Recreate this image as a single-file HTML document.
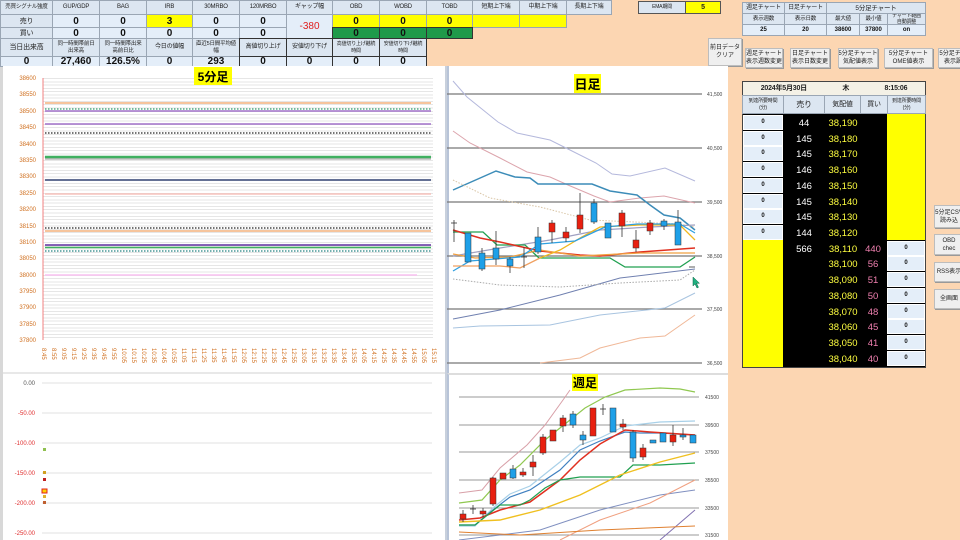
<!DOCTYPE html>
<html><head><meta charset="utf-8"><style>
*{margin:0;padding:0;box-sizing:border-box}
body{width:960px;height:540px;overflow:hidden;background:#fcd6b2;font-family:"Liberation Sans","Noto Sans CJK JP",sans-serif;position:relative}
.c{position:absolute;display:flex;align-items:center;justify-content:center;text-align:center;border:1px solid #9aa6b4;background:#dce6f1;font-size:6px;line-height:7px;color:#222;white-space:nowrap;overflow:hidden;letter-spacing:-0.2px}
.v{background:#e4eef9;font-size:10px;font-weight:bold;color:#111;letter-spacing:0}
.y{background:#ffff00}.g{background:#1f9a4a}
.k{border-color:#333}
.btn{position:absolute;background:#efefef;border:1px solid #bdbdbd;font-size:6px;line-height:8px;text-align:center;display:flex;align-items:center;justify-content:center;color:#222;box-shadow:1px 1px 0 #999;white-space:nowrap;overflow:hidden}
.panel{position:absolute;background:#fff}
</style></head><body>
<div style="position:absolute;left:0;top:0;width:3px;height:540px;background:#d8d8d8"></div>
<div class="c" style="left:0;top:0;width:53px;height:15px;font-size:5.5px">売買シグナル強度</div>
<div class="c" style="left:52px;top:0;width:48px;height:15px">GUP/GDP</div>
<div class="c" style="left:99px;top:0;width:48px;height:15px">BAG</div>
<div class="c" style="left:146px;top:0;width:47px;height:15px">IRB</div>
<div class="c" style="left:192px;top:0;width:48px;height:15px">30MRBO</div>
<div class="c" style="left:239px;top:0;width:48px;height:15px">120MRBO</div>
<div class="c" style="left:286px;top:0;width:47px;height:15px">ギャップ幅</div>
<div class="c" style="left:332px;top:0;width:48px;height:15px">OBD</div>
<div class="c" style="left:379px;top:0;width:48px;height:15px">WOBD</div>
<div class="c" style="left:426px;top:0;width:47px;height:15px">TOBD</div>
<div class="c" style="left:472px;top:0;width:48px;height:15px">短期上下端</div>
<div class="c" style="left:519px;top:0;width:48px;height:15px">中期上下端</div>
<div class="c" style="left:566px;top:0;width:46px;height:15px">長期上下端</div>
<div class="c" style="left:0;top:14px;width:53px;height:14px;font-size:7px">売り</div>
<div class="c v" style="left:52px;top:14px;width:48px;height:14px">0</div>
<div class="c v" style="left:99px;top:14px;width:48px;height:14px">0</div>
<div class="c v y" style="left:146px;top:14px;width:47px;height:14px">3</div>
<div class="c v" style="left:192px;top:14px;width:48px;height:14px">0</div>
<div class="c v" style="left:239px;top:14px;width:48px;height:14px">0</div>
<div class="c v" style="left:286px;top:14px;width:47px;height:25px;color:#e02020;font-weight:normal">-380</div>
<div class="c v y" style="left:332px;top:14px;width:48px;height:14px">0</div>
<div class="c v y" style="left:379px;top:14px;width:48px;height:14px">0</div>
<div class="c v y" style="left:426px;top:14px;width:47px;height:14px">0</div>
<div class="c y" style="left:472px;top:14px;width:48px;height:14px"></div>
<div class="c y" style="left:519px;top:14px;width:48px;height:14px"></div>
<div class="c" style="left:0;top:27px;width:53px;height:12px;font-size:7px">買い</div>
<div class="c v" style="left:52px;top:27px;width:48px;height:12px">0</div>
<div class="c v" style="left:99px;top:27px;width:48px;height:12px">0</div>
<div class="c v" style="left:146px;top:27px;width:47px;height:12px">0</div>
<div class="c v" style="left:192px;top:27px;width:48px;height:12px">0</div>
<div class="c v" style="left:239px;top:27px;width:48px;height:12px">0</div>
<div class="c v g k" style="left:332px;top:27px;width:48px;height:12px">0</div>
<div class="c v g k" style="left:379px;top:27px;width:48px;height:12px">0</div>
<div class="c v g k" style="left:426px;top:27px;width:47px;height:12px">0</div>
<div class="c" style="left:0;top:38px;width:53px;height:19px;font-size:7px">当日出来高</div>
<div class="c" style="left:52px;top:38px;width:48px;height:19px;font-size:5.5px">同一時間帯前日<br>出来高</div>
<div class="c" style="left:99px;top:38px;width:48px;height:19px;font-size:5.5px">同一時間帯出来<br>高前日比</div>
<div class="c" style="left:146px;top:38px;width:47px;height:19px">今日の値幅</div>
<div class="c" style="left:192px;top:38px;width:48px;height:19px;font-size:5.5px">直近5日間平均値<br>幅</div>
<div class="c k" style="left:239px;top:38px;width:48px;height:19px">高値切り上げ</div>
<div class="c k" style="left:286px;top:38px;width:47px;height:19px">安値切り下げ</div>
<div class="c k" style="left:332px;top:38px;width:48px;height:19px;font-size:5px">高値切り上げ継続<br>時間</div>
<div class="c k" style="left:379px;top:38px;width:48px;height:19px;font-size:5px">安値切り下げ継続<br>時間</div>
<div class="c v" style="left:0;top:56px;width:53px;height:11px">0</div>
<div class="c v" style="left:52px;top:56px;width:48px;height:11px">27,460</div>
<div class="c v" style="left:99px;top:56px;width:48px;height:11px">126.5%</div>
<div class="c v" style="left:146px;top:56px;width:47px;height:11px">0</div>
<div class="c v" style="left:192px;top:56px;width:48px;height:11px">293</div>
<div class="c v k" style="left:239px;top:56px;width:48px;height:11px">0</div>
<div class="c v k" style="left:286px;top:56px;width:47px;height:11px">0</div>
<div class="c v k" style="left:332px;top:56px;width:48px;height:11px">0</div>
<div class="c v k" style="left:379px;top:56px;width:48px;height:11px">0</div>

<div class="c" style="left:638px;top:1px;width:48px;height:13px;border-color:#555;font-size:5px">EMA期間</div>
<div class="c y" style="left:685px;top:1px;width:36px;height:13px;border-color:#555;font-size:7px;font-weight:bold">5</div>
<div class="c" style="left:742px;top:2px;width:43px;height:12px;font-size:6px">週足チャート</div>
<div class="c" style="left:784px;top:2px;width:43px;height:12px;font-size:6px">日足チャート</div>
<div class="c" style="left:826px;top:2px;width:100px;height:12px;font-size:6.5px">5分足チャート</div>
<div class="c" style="left:742px;top:13px;width:43px;height:12px;font-size:5.5px">表示週数</div>
<div class="c" style="left:784px;top:13px;width:43px;height:12px;font-size:5.5px">表示日数</div>
<div class="c" style="left:826px;top:13px;width:34px;height:12px;font-size:5.5px">最大値</div>
<div class="c" style="left:859px;top:13px;width:29px;height:12px;font-size:5.5px">最小値</div>
<div class="c" style="left:887px;top:13px;width:39px;height:12px;font-size:5px;line-height:6px">チャート範囲<br>自動調整</div>
<div class="c v" style="left:742px;top:24px;width:43px;height:12px;font-size:6px">25</div>
<div class="c v" style="left:784px;top:24px;width:43px;height:12px;font-size:6px">20</div>
<div class="c v" style="left:826px;top:24px;width:34px;height:12px;font-size:6px">38600</div>
<div class="c v" style="left:859px;top:24px;width:29px;height:12px;font-size:6px">37800</div>
<div class="c v" style="left:887px;top:24px;width:39px;height:12px;font-size:6px">on</div>
<div class="btn" style="left:708px;top:38px;width:34px;height:28px">前日データ<br>クリア</div>
<div class="btn" style="left:745px;top:48px;width:38px;height:20px">週足チャート<br>表示週数変更</div>
<div class="btn" style="left:790px;top:48px;width:40px;height:20px">日足チャート<br>表示日数変更</div>
<div class="btn" style="left:838px;top:48px;width:40px;height:20px">5分足チャート<br>気配値表示</div>
<div class="btn" style="left:884px;top:48px;width:49px;height:20px">5分足チャート<br>OME値表示</div>
<div class="btn" style="left:938px;top:48px;width:30px;height:20px">5分足チャ<br>表示調</div>
<div class="btn" style="left:934px;top:205px;width:30px;height:23px">5分足CSV<br>読み込</div>
<div class="btn" style="left:934px;top:234px;width:30px;height:21px">OBD<br>chec</div>
<div class="btn" style="left:934px;top:262px;width:30px;height:20px">RSS表示</div>
<div class="btn" style="left:934px;top:289px;width:30px;height:20px">全画面</div>

<div style="position:absolute;left:742px;top:81px;width:184px;height:287px;background:#000;border:1px solid #444"></div>
<div class="c" style="left:742px;top:81px;width:184px;height:15px;background:#f4f1e6;border-color:#444;font-size:7px;font-weight:bold;justify-content:space-around">
<span>2024年5月30日</span><span>木</span><span>8:15:06</span></div>
<div class="c" style="left:742px;top:95px;width:42px;height:19px;font-size:5px">到達所要時間<br>(分)</div>
<div class="c" style="left:783px;top:95px;width:42px;height:19px;font-size:8px">売り</div>
<div class="c" style="left:824px;top:95px;width:37px;height:19px;font-size:7px">気配値</div>
<div class="c" style="left:860px;top:95px;width:28px;height:19px;font-size:7px">買い</div>
<div class="c" style="left:887px;top:95px;width:39px;height:19px;font-size:5px">到達所要時間<br>(分)</div>
<div style="position:absolute;left:887px;top:114px;width:38px;height:126px;background:#ffff00"></div>
<div style="position:absolute;left:743px;top:240px;width:40px;height:127px;background:#ffff00"></div>
<div class="c v" style="left:743px;top:115px;width:40px;height:15px;font-size:6px;border-color:#fff">0</div>
<div class="c v" style="left:743px;top:131px;width:40px;height:15px;font-size:6px;border-color:#fff">0</div>
<div class="c v" style="left:743px;top:146px;width:40px;height:15px;font-size:6px;border-color:#fff">0</div>
<div class="c v" style="left:743px;top:162px;width:40px;height:15px;font-size:6px;border-color:#fff">0</div>
<div class="c v" style="left:743px;top:178px;width:40px;height:15px;font-size:6px;border-color:#fff">0</div>
<div class="c v" style="left:743px;top:194px;width:40px;height:15px;font-size:6px;border-color:#fff">0</div>
<div class="c v" style="left:743px;top:209px;width:40px;height:15px;font-size:6px;border-color:#fff">0</div>
<div class="c v" style="left:743px;top:225px;width:40px;height:15px;font-size:6px;border-color:#fff">0</div>
<div class="c v" style="left:887px;top:241px;width:38px;height:15px;font-size:6px;border-color:#fff">0</div>
<div class="c v" style="left:887px;top:256px;width:38px;height:15px;font-size:6px;border-color:#fff">0</div>
<div class="c v" style="left:887px;top:272px;width:38px;height:15px;font-size:6px;border-color:#fff">0</div>
<div class="c v" style="left:887px;top:288px;width:38px;height:15px;font-size:6px;border-color:#fff">0</div>
<div class="c v" style="left:887px;top:304px;width:38px;height:15px;font-size:6px;border-color:#fff">0</div>
<div class="c v" style="left:887px;top:319px;width:38px;height:15px;font-size:6px;border-color:#fff">0</div>
<div class="c v" style="left:887px;top:335px;width:38px;height:15px;font-size:6px;border-color:#fff">0</div>
<div class="c v" style="left:887px;top:351px;width:38px;height:15px;font-size:6px;border-color:#fff">0</div>

<svg style="position:absolute;left:0;top:0" width="960" height="540" font-family="Liberation Sans, Noto Sans CJK JP, sans-serif">
<g font-size="9.5" text-anchor="middle">
<g fill="#fff"><text x="804" y="126">44</text><text x="804" y="142">145</text><text x="804" y="157">145</text><text x="804" y="173">146</text><text x="804" y="189">146</text><text x="804" y="205">145</text><text x="804" y="220">145</text><text x="804" y="236">144</text><text x="804" y="252">566</text></g>
<g fill="#ffff40"><text x="843" y="126">38,190</text><text x="843" y="142">38,180</text><text x="843" y="157">38,170</text><text x="843" y="173">38,160</text><text x="843" y="189">38,150</text><text x="843" y="205">38,140</text><text x="843" y="220">38,130</text><text x="843" y="236">38,120</text><text x="843" y="252">38,110</text><text x="843" y="267">38,100</text><text x="843" y="283">38,090</text><text x="843" y="299">38,080</text><text x="843" y="315">38,070</text><text x="843" y="330">38,060</text><text x="843" y="346">38,050</text><text x="843" y="362">38,040</text></g>
<g fill="#f080b0"><text x="873" y="252">440</text><text x="873" y="267">56</text><text x="873" y="283">51</text><text x="873" y="299">50</text><text x="873" y="315">48</text><text x="873" y="330">45</text><text x="873" y="346">41</text><text x="873" y="362">40</text></g>
</g>
</svg>

<div class="panel" style="left:3px;top:66px;width:442px;height:306px"></div>
<div class="panel" style="left:3px;top:372px;width:442px;height:168px;border-top:2px solid #e8e8e8"></div>
<div class="panel" style="left:447px;top:66px;width:281px;height:308px;border-left:2px solid #b8c4d8"></div>
<div class="panel" style="left:447px;top:373px;width:281px;height:167px;border-left:2px solid #b8c4d8;border-top:2px solid #ddd"></div>
<div style="position:absolute;left:445px;top:66px;width:2px;height:474px;background:#c8d0dc"></div>
<div style="position:absolute;left:43px;top:78px;width:390px;height:262px;background:repeating-linear-gradient(to bottom,#e6e6e6 0,#e6e6e6 1px,transparent 1px,transparent 3.28px)"></div>

<svg style="position:absolute;left:0;top:0" width="960" height="540" font-family="Liberation Sans, Noto Sans CJK JP, sans-serif">
<rect x="194" y="67" width="38" height="18" fill="#ffff00"/>
<text x="213" y="81" font-size="12" font-weight="bold" text-anchor="middle">5分足</text>
<line x1="43" y1="78" x2="43" y2="340" stroke="#f08080" stroke-width="1"/>
<g font-size="6" fill="#d07020" text-anchor="end">
<text x="36" y="80">38600</text><text x="36" y="96">38550</text><text x="36" y="113">38500</text><text x="36" y="129">38450</text><text x="36" y="146">38400</text><text x="36" y="162">38350</text><text x="36" y="178">38300</text><text x="36" y="195">38250</text><text x="36" y="211">38200</text><text x="36" y="228">38150</text><text x="36" y="244">38100</text><text x="36" y="260">38050</text><text x="36" y="277">38000</text><text x="36" y="293">37950</text><text x="36" y="309">37900</text><text x="36" y="326">37850</text><text x="36" y="342">37800</text>
</g>
<g stroke-width="1.2" fill="none">
<line x1="45" y1="103" x2="431" y2="103" stroke="#f0a060"/>
<line x1="45" y1="109" x2="431" y2="109" stroke="#30a070" stroke-dasharray="1.5 1.5"/>
<line x1="45" y1="111" x2="431" y2="111" stroke="#a070c8" stroke-width="1.6"/>
<line x1="45" y1="124" x2="431" y2="124" stroke="#a070c8" stroke-width="1.6"/>
<line x1="45" y1="133" x2="431" y2="133" stroke="#222" stroke-dasharray="1.5 1.5"/>
<line x1="45" y1="157" x2="431" y2="157" stroke="#40b060" stroke-width="2.5"/>
<line x1="45" y1="159" x2="431" y2="159" stroke="#999" stroke-width="1"/>
<line x1="45" y1="180" x2="431" y2="180" stroke="#304070" stroke-width="1.6"/>
<line x1="45" y1="194" x2="431" y2="194" stroke="#f8b8b0"/>
<line x1="45" y1="228" x2="431" y2="228" stroke="#222" stroke-dasharray="1.5 1.5"/>
<line x1="45" y1="231" x2="431" y2="231" stroke="#f0a060"/>
<line x1="45" y1="245" x2="431" y2="245" stroke="#6030a0" stroke-width="1.6"/>
<line x1="45" y1="247.5" x2="431" y2="247.5" stroke="#40b060" stroke-width="1.6"/>
<line x1="45" y1="251" x2="431" y2="251" stroke="#208080" stroke-dasharray="1.5 1.5"/>
<line x1="45" y1="275" x2="417" y2="275" stroke="#f8c0f0" stroke-width="1.5"/>
</g>
<g font-size="6" fill="#d07020">
<text transform="translate(42,348) rotate(90)">8:45</text><text transform="translate(52,348) rotate(90)">8:55</text><text transform="translate(62,348) rotate(90)">9:05</text><text transform="translate(72,348) rotate(90)">9:15</text><text transform="translate(82,348) rotate(90)">9:25</text><text transform="translate(92,348) rotate(90)">9:35</text><text transform="translate(102,348) rotate(90)">9:45</text><text transform="translate(112,348) rotate(90)">9:55</text><text transform="translate(122,348) rotate(90)">10:05</text><text transform="translate(132,348) rotate(90)">10:15</text><text transform="translate(142,348) rotate(90)">10:25</text><text transform="translate(152,348) rotate(90)">10:35</text><text transform="translate(162,348) rotate(90)">10:45</text><text transform="translate(172,348) rotate(90)">10:55</text><text transform="translate(182,348) rotate(90)">11:05</text><text transform="translate(192,348) rotate(90)">11:15</text><text transform="translate(202,348) rotate(90)">11:25</text><text transform="translate(212,348) rotate(90)">11:35</text><text transform="translate(222,348) rotate(90)">11:45</text><text transform="translate(232,348) rotate(90)">11:55</text><text transform="translate(242,348) rotate(90)">12:05</text><text transform="translate(252,348) rotate(90)">12:15</text><text transform="translate(262,348) rotate(90)">12:25</text><text transform="translate(272,348) rotate(90)">12:35</text><text transform="translate(282,348) rotate(90)">12:45</text><text transform="translate(292,348) rotate(90)">12:55</text><text transform="translate(302,348) rotate(90)">13:05</text><text transform="translate(312,348) rotate(90)">13:15</text><text transform="translate(322,348) rotate(90)">13:25</text><text transform="translate(332,348) rotate(90)">13:35</text><text transform="translate(342,348) rotate(90)">13:45</text><text transform="translate(352,348) rotate(90)">13:55</text><text transform="translate(362,348) rotate(90)">14:05</text><text transform="translate(372,348) rotate(90)">14:15</text><text transform="translate(382,348) rotate(90)">14:25</text><text transform="translate(392,348) rotate(90)">14:35</text><text transform="translate(402,348) rotate(90)">14:45</text><text transform="translate(412,348) rotate(90)">14:55</text><text transform="translate(422,348) rotate(90)">15:05</text><text transform="translate(432,348) rotate(90)">15:15</text>
</g>
<g stroke="#e0e0e0" stroke-width="1">
<line x1="42" y1="383" x2="432" y2="383"/><line x1="42" y1="413" x2="432" y2="413"/><line x1="42" y1="443" x2="432" y2="443"/><line x1="42" y1="473" x2="432" y2="473"/><line x1="42" y1="503" x2="432" y2="503"/><line x1="42" y1="533" x2="432" y2="533"/>
</g>
<g font-size="6" text-anchor="end"><text x="35" y="385" fill="#555">0.00</text><g fill="#e03030"><text x="35" y="415">-50.00</text><text x="35" y="445">-100.00</text><text x="35" y="475">-150.00</text><text x="35" y="505">-200.00</text><text x="35" y="535">-250.00</text></g></g>
<rect x="43" y="448" width="3" height="3" fill="#90c050"/>
<rect x="43" y="471" width="3" height="3" fill="#d0a020"/>
<rect x="43" y="478" width="3" height="3" fill="#c02020"/>
<rect x="42" y="489" width="5" height="4" fill="#ffd000" stroke="#e02020"/>
<rect x="43" y="495" width="3" height="3" fill="#e0b030"/>
<rect x="43" y="501" width="3" height="3" fill="#c06030"/>

<rect x="574" y="74" width="27" height="19" fill="#ffff00"/>
<text x="587.5" y="89" font-size="13" font-weight="bold" text-anchor="middle">日足</text>
<g stroke="#777" stroke-width="1.2"><line x1="447" y1="94" x2="702" y2="94"/><line x1="447" y1="148" x2="702" y2="148"/><line x1="447" y1="202" x2="702" y2="202"/><line x1="447" y1="256" x2="702" y2="256"/><line x1="447" y1="309" x2="702" y2="309"/><line x1="447" y1="363" x2="702" y2="363"/></g>
<g font-size="5" fill="#444"><text x="707" y="96">41,500</text><text x="707" y="150">40,500</text><text x="707" y="204">39,500</text><text x="707" y="258">38,500</text><text x="707" y="311">37,500</text><text x="707" y="365">36,500</text></g>
<g fill="none" stroke-width="1">
<polyline stroke="#b4b8dc" points="453,81 467,97 498,122 517,133 550,140 572,151 596,163 612,174 630,176 665,168 695,181"/>
<polyline stroke="#dca4ac" points="453,131 470,143 500,158 527,172 550,177 568,185 594,196 610,202 640,198 664,196 695,203"/>
<polyline stroke="#3c8cb8" stroke-width="1.5" points="453,190 496,171 515,177 530,178 538,184 592,184 610,191 637,195 650,205 664,215 680,218 695,230"/>
<polyline stroke="#d8c4a4" stroke-dasharray="1.5 1.5" points="453,180 490,198 540,207 590,220 680,224 695,227"/>
<polyline stroke="#a0a0c0" stroke-width="1.2" points="453,256 500,248 550,240 600,230 650,227 695,225"/>
<polyline stroke="#20a050" stroke-width="1.3" points="453,232 483,232 497,245 525,245 539,258 610,258 625,267 680,267 695,257"/>
<polyline stroke="#e03020" stroke-width="1.5" points="453,230 480,238 500,242 540,251 580,255 600,256 640,252 695,248"/>
<polyline stroke="#f0a040" stroke-width="1.3" points="453,254 475,258 510,257 540,250 580,256 640,253 695,253"/>
<polyline stroke="#f0b820" stroke-width="1.3" points="540,258 560,250 582,237 600,227 640,225 680,225 695,240"/>
<polyline stroke="#30a0e0" stroke-width="1.3" points="453,271 470,261 520,257 540,244 575,241 605,227 637,224 680,224 695,233"/>
<polyline stroke="#f0a060" stroke-width="1.3" points="453,266 500,266 520,268 540,258"/>
<polyline stroke="#7080b0" points="453,319 500,310 560,295 620,278 695,269"/>
<polyline stroke="#aaa" stroke-dasharray="1.5 1.5" points="453,279 500,285 560,287 620,283 680,280 695,270"/>
<polyline stroke="#a8c4e0" points="453,328 480,326 550,325 600,315 665,308 695,293"/>
<polyline stroke="#f0b898" points="540,363 580,358 600,348 640,338 665,336 695,315"/>
</g>
<g stroke="#333" stroke-width="0.8">
<line x1="454" y1="220" x2="454" y2="242"/><line x1="482" y1="248" x2="482" y2="271"/><line x1="496" y1="231" x2="496" y2="265"/><line x1="510" y1="257" x2="510" y2="273"/><line x1="524" y1="247" x2="524" y2="268"/><line x1="538" y1="227" x2="538" y2="254"/><line x1="552" y1="220" x2="552" y2="243"/><line x1="566" y1="227" x2="566" y2="242"/><line x1="580" y1="193" x2="580" y2="233"/><line x1="594" y1="199" x2="594" y2="224"/><line x1="622" y1="210" x2="622" y2="237"/><line x1="636" y1="230" x2="636" y2="252"/><line x1="650" y1="220" x2="650" y2="235"/><line x1="664" y1="219" x2="664" y2="230"/><line x1="678" y1="210" x2="678" y2="245"/>
<line x1="451" y1="223" x2="457" y2="223"/><line x1="521" y1="257" x2="527" y2="257"/><line x1="689" y1="267" x2="695" y2="267"/>
</g>
<g stroke="#333" stroke-width="0.5">
<rect x="465" y="233" width="6" height="29" fill="#1ea0e8"/><rect x="479" y="253" width="6" height="16" fill="#1ea0e8"/><rect x="493" y="248" width="6" height="11" fill="#1ea0e8"/><rect x="507" y="259" width="6" height="7" fill="#1ea0e8"/><rect x="535" y="237" width="6" height="15" fill="#1ea0e8"/><rect x="549" y="223" width="6" height="9" fill="#e82010"/><rect x="563" y="232" width="6" height="6" fill="#e82010"/><rect x="577" y="215" width="6" height="14" fill="#e82010"/><rect x="591" y="203" width="6" height="19" fill="#1ea0e8"/><rect x="605" y="223" width="6" height="15" fill="#1ea0e8"/><rect x="619" y="213" width="6" height="13" fill="#e82010"/><rect x="633" y="240" width="6" height="8" fill="#e82010"/><rect x="647" y="223" width="6" height="8" fill="#e82010"/><rect x="661" y="221" width="6" height="5" fill="#1ea0e8"/><rect x="675" y="222" width="6" height="23" fill="#1ea0e8"/>
</g>
<path d="M693,277 l0,9 l2,-2 l2,4 l1.5,-0.7 l-2,-4 l3,0 z" fill="#20b080" stroke="#086040" stroke-width="0.5"/>

<rect x="572" y="374" width="26" height="17" fill="#ffff00"/>
<text x="585" y="387" font-size="12" font-weight="bold" text-anchor="middle">週足</text>
<g stroke="#999" stroke-width="1"><line x1="459" y1="397" x2="699" y2="397"/><line x1="459" y1="425" x2="699" y2="425"/><line x1="459" y1="452" x2="699" y2="452"/><line x1="459" y1="480" x2="699" y2="480"/><line x1="459" y1="508" x2="699" y2="508"/><line x1="459" y1="535" x2="699" y2="535"/></g>
<g font-size="5" fill="#444"><text x="705" y="399">41500</text><text x="705" y="427">39500</text><text x="705" y="454">37500</text><text x="705" y="482">35500</text><text x="705" y="510">33500</text><text x="705" y="537">31500</text></g>
<g fill="none" stroke-width="1.2">
<polyline stroke="#d8a0a8" stroke-width="1" points="459,493 482,490 500,468 527,445 545,425 563,400 570,390"/>
<polyline stroke="#90c850" points="459,503 482,500 500,480 520,465 545,440 570,420 585,408 605,397 625,390 660,388 680,389 695,392"/>
<polyline stroke="#a8d0e8" points="459,526 475,526 493,508 510,494 530,486 560,462 580,445 600,438 625,426 660,422 695,421"/>
<polyline stroke="#4080c0" points="459,525 475,525 493,510 510,497 530,490 560,470 580,450 600,441 625,432 640,433 660,433 695,435"/>
<polyline stroke="#e03020" stroke-width="1.5" points="459,520 480,518 500,510 530,502 560,480 580,460 600,444 625,430 650,432 695,435"/>
<polyline stroke="#20a050" points="459,525 475,525 500,505 520,505 530,500 545,488 560,480 580,477 620,477 633,465 660,465 695,463"/>
<polyline stroke="#f0c020" stroke-width="1.4" points="459,522 500,520 540,510 580,495 620,475 660,462 695,453"/>
<polyline stroke="#8090c0" stroke-width="1" points="459,540 540,530 600,510 660,495 695,490"/>
<polyline stroke="#f0a080" stroke-width="1" points="560,540 600,520 650,503 695,480"/>
<polyline stroke="#8070b0" stroke-width="1" points="660,540 695,510"/>
<polyline stroke="#e08030" stroke-width="1" points="459,532 520,535 600,530 695,526"/>
</g>
<g stroke="#333" stroke-width="0.8">
<line x1="463" y1="510" x2="463" y2="522"/><line x1="473" y1="505" x2="473" y2="514"/><line x1="483" y1="508" x2="483" y2="517"/><line x1="493" y1="477" x2="493" y2="506"/><line x1="513" y1="465" x2="513" y2="479"/><line x1="523" y1="468" x2="523" y2="477"/><line x1="533" y1="455" x2="533" y2="476"/><line x1="543" y1="434" x2="543" y2="455"/><line x1="563" y1="415" x2="563" y2="432"/><line x1="573" y1="411" x2="573" y2="428"/><line x1="583" y1="431" x2="583" y2="445"/><line x1="603" y1="404" x2="603" y2="415"/><line x1="623" y1="419" x2="623" y2="430"/><line x1="633" y1="430" x2="633" y2="462"/><line x1="643" y1="444" x2="643" y2="460"/><line x1="673" y1="425" x2="673" y2="446"/><line x1="683" y1="428" x2="683" y2="440"/>
<line x1="470" y1="509" x2="476" y2="509"/><line x1="600" y1="409" x2="606" y2="409"/>
</g>
<g stroke="#333" stroke-width="0.5">
<rect x="460" y="514" width="6" height="5" fill="#e82010"/><rect x="480" y="511" width="6" height="3" fill="#e82010"/><rect x="490" y="478" width="6" height="26" fill="#e82010"/><rect x="500" y="473" width="6" height="6" fill="#e82010"/><rect x="510" y="469" width="6" height="9" fill="#1ea0e8"/><rect x="520" y="472" width="6" height="3" fill="#e82010"/><rect x="530" y="462" width="6" height="5" fill="#e82010"/><rect x="540" y="437" width="6" height="16" fill="#e82010"/><rect x="550" y="430" width="6" height="11" fill="#e82010"/><rect x="560" y="418" width="6" height="8" fill="#e82010"/><rect x="570" y="414" width="6" height="11" fill="#1ea0e8"/><rect x="580" y="435" width="6" height="5" fill="#1ea0e8"/><rect x="590" y="408" width="6" height="28" fill="#e82010"/><rect x="610" y="408" width="6" height="24" fill="#1ea0e8"/><rect x="620" y="424" width="6" height="3" fill="#e82010"/><rect x="630" y="432" width="6" height="26" fill="#1ea0e8"/><rect x="640" y="448" width="6" height="9" fill="#e82010"/><rect x="650" y="440" width="6" height="3" fill="#1ea0e8"/><rect x="660" y="433" width="6" height="9" fill="#1ea0e8"/><rect x="670" y="435" width="6" height="7" fill="#e82010"/><rect x="680" y="435" width="6" height="2" fill="#1ea0e8"/><rect x="690" y="435" width="6" height="8" fill="#1ea0e8"/>
</g>
</svg>
</body></html>
